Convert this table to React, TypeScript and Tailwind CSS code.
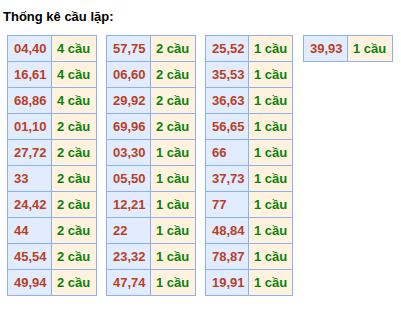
import React from "react";

const tables: [string, string][][] = [
  [
    ["04,40", "4 cầu"],
    ["16,61", "4 cầu"],
    ["68,86", "4 cầu"],
    ["01,10", "2 cầu"],
    ["27,72", "2 cầu"],
    ["33", "2 cầu"],
    ["24,42", "2 cầu"],
    ["44", "2 cầu"],
    ["45,54", "2 cầu"],
    ["49,94", "2 cầu"],
  ],
  [
    ["57,75", "2 cầu"],
    ["06,60", "2 cầu"],
    ["29,92", "2 cầu"],
    ["69,96", "2 cầu"],
    ["03,30", "1 cầu"],
    ["05,50", "1 cầu"],
    ["12,21", "1 cầu"],
    ["22", "1 cầu"],
    ["23,32", "1 cầu"],
    ["47,74", "1 cầu"],
  ],
  [
    ["25,52", "1 cầu"],
    ["35,53", "1 cầu"],
    ["36,63", "1 cầu"],
    ["56,65", "1 cầu"],
    ["66", "1 cầu"],
    ["37,73", "1 cầu"],
    ["77", "1 cầu"],
    ["48,84", "1 cầu"],
    ["78,87", "1 cầu"],
    ["19,91", "1 cầu"],
  ],
  [["39,93", "1 cầu"]],
];

export default function App() {
  return (
    <div
      className="w-[401px] h-[310px] bg-white"
      style={{ fontFamily: '"Liberation Sans", Arial, sans-serif' }}
    >
      <div className="pt-[9px] pl-[3px] text-[13px] font-bold text-black leading-[16px]">
        Thống kê cầu lặp:
      </div>
      <div className="flex items-start gap-[9px] pl-[7px] mt-[10px]">
        {tables.map((rows, ti) => (
          <table
            key={ti}
            className={`border-collapse border border-[#8db0ee] text-[13px] leading-[15px] table-fixed ${
              ti === 3 ? "ml-[1px]" : ""
            }`}
          >
            <tbody>
              {rows.map(([a, b], ri) => (
                <tr key={ri} className="h-[26px]">
                  <td
                    className={`border border-[#8db0ee] bg-[#e1edff] text-[#bb3f1f] font-bold pl-[6px] pr-0 text-left whitespace-nowrap ${
                      ti === 2 ? "w-[43px]" : "w-[44px]"
                    }`}
                  >
                    {a}
                  </td>
                  <td
                    className={`border border-[#8db0ee] bg-[#fff3e0] text-[#0a820a] font-bold pl-[5px] pr-0 text-left whitespace-nowrap ${
                      ti === 2 ? "w-[44px]" : "w-[45px]"
                    }`}
                  >
                    {b}
                  </td>
                </tr>
              ))}
            </tbody>
          </table>
        ))}
      </div>
    </div>
  );
}
